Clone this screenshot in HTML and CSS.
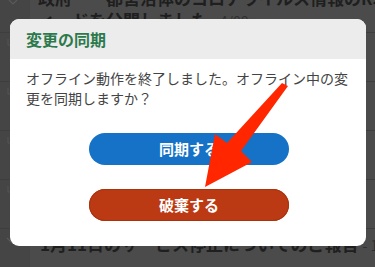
FILE: index.html
```html
<!DOCTYPE html>
<html lang="ja">
<head>
<meta charset="utf-8">
<link rel="stylesheet" href="styles.css">
</head>
<body>
<div class="list">
  <div class="row row-first">
    <div class="side"><svg class="chev" width="10" height="6" viewBox="0 0 10 6"><path d="M1 0 L5 4 L9 0" fill="none" stroke="#5a5a5a" stroke-width="1.2"/></svg></div>
    <div class="main"><div class="title-bg shift">政府　　都営治体のコロナウイルス情報のRSSフ<br>ィードを公開しました <span class="date">- 4/09</span></div></div>
  </div>
  <div class="row"><div class="side"><svg class="hook" width="6" height="8" viewBox="0 0 6 8"><path d="M1 0 V6 H5" fill="none" stroke="#555" stroke-width="1"/></svg></div><div class="main"></div></div>
  <div class="row"><div class="side"><svg class="hook" width="6" height="8" viewBox="0 0 6 8"><path d="M1 0 V6 H5" fill="none" stroke="#555" stroke-width="1"/></svg></div><div class="main"></div></div>
  <div class="row"><div class="side"><svg class="hook" width="6" height="8" viewBox="0 0 6 8"><path d="M1 0 V6 H5" fill="none" stroke="#555" stroke-width="1"/></svg></div><div class="main"></div></div>
  <div class="row"><div class="side"><svg class="hook" width="6" height="8" viewBox="0 0 6 8"><path d="M1 0 V6 H5" fill="none" stroke="#555" stroke-width="1"/></svg></div><div class="main"></div></div>
  <div class="row row-last">
    <div class="side"><svg class="chev2" width="12" height="8" viewBox="0 0 12 8"><path d="M1 1 L6 6 L11 1" fill="none" stroke="#5a5a5a" stroke-width="1.2"/></svg></div>
    <div class="main"><div class="title-bg last">1月11日のサービス停止についてのご報告 <span class="date">- 1/11</span></div></div>
  </div>
</div>

<div class="dialog">
  <div class="dialog-head">変更の同期</div>
  <div class="dialog-body">
    <p class="msg">オフライン動作を終了しました。オフライン中の変更を同期しますか？</p>
    <div class="actions">
      <button class="btn btn-sync">同期する</button>
      <button class="btn btn-discard">破棄する</button>
    </div>
  </div>
</div>

<svg class="arrow" width="375" height="267" viewBox="0 0 375 267">
  <polygon points="282,83 288,86 241,151 252,162 205,187 215,134 227,143" fill="#ff2600"/>
</svg>
</body>
</html>
```

FILE: styles.css
```css
html, body {
  margin: 0;
  padding: 0;
}
body {
  width: 375px;
  height: 267px;
  overflow: hidden;
  position: relative;
  background: #4b4b4b;
  font-family: "Noto Sans CJK JP", "Noto Sans", sans-serif;
}
.list {
  display: flex;
  flex-direction: column;
  height: 267px;
  overflow: hidden;
}
.row {
  display: flex;
  height: 48px;
  flex: none;
  border-bottom: 1px solid #3e3e3e;
  overflow: hidden;
}
.row-first {
  height: 32px;
}
.row-last {
  height: 38px;
  border-bottom: none;
}
.side {
  width: 30px;
  flex: none;
  background: #454545;
  position: relative;
}
.main {
  flex: 1;
  min-width: 0;
  overflow: hidden;
}
.chev {
  display: block;
  margin: 0 0 0 8px;
}
.hook {
  display: block;
  margin: 6px 0 0 7px;
}
.chev2 {
  display: block;
  margin: 8px 0 0 6px;
}
.title-bg {
  font-size: 17px;
  font-weight: 700;
  line-height: 22px;
  color: #1f1f1f;
  padding-left: 8px;
  white-space: nowrap;
}
.title-bg.shift {
  margin-top: -13px;
}
.title-bg.last {
  margin-top: 4px;
  padding-left: 10px;
}
.date {
  font-size: 14px;
  font-weight: 400;
  color: #303030;
}
.dialog {
  position: absolute;
  left: 10px;
  top: 19px;
  width: 356px;
  height: 227px;
  background: #ffffff;
  border-radius: 9px;
  overflow: hidden;
  display: flex;
  flex-direction: column;
}
.dialog-head {
  height: 40px;
  background: #ececec;
  color: #2c7a4c;
  font-size: 16px;
  font-weight: 700;
  line-height: 40px;
  padding-left: 16px;
  flex: none;
}
.dialog-body {
  padding: 9px 16px 0 16px;
}
.msg {
  margin: 0;
  font-size: 14px;
  line-height: 20px;
  color: #444444;
}
.actions {
  display: flex;
  flex-direction: column;
  align-items: center;
  gap: 24px;
  margin-top: 25px;
  padding-left: 2px;
}
.btn {
  width: 200px;
  height: 32px;
  border-radius: 16px;
  border: none;
  color: #ffffff;
  font-family: "Noto Sans CJK JP", "Noto Sans", sans-serif;
  font-size: 15px;
  font-weight: 700;
  padding: 0;
  line-height: 32px;
}
.btn-sync {
  background: #1672c6;
}
.btn-discard {
  background: #bb3a13;
  box-shadow: inset 0 0 0 1px #a8330f;
}
.arrow {
  position: absolute;
  left: 0;
  top: 0;
  pointer-events: none;
}
```
